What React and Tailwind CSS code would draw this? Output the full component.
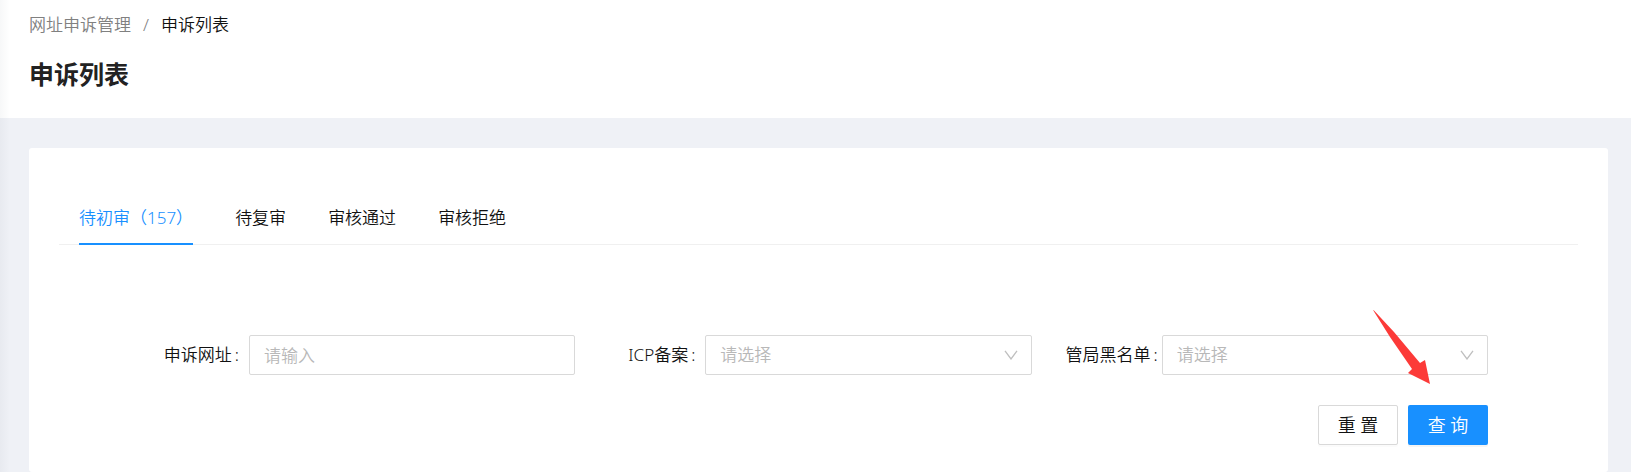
import React from "react";

const tabs = ["待初审（157）", "待复审", "审核通过", "审核拒绝"];

function Field({ id, label, tight, children }) {
  return (
    <div className="flex items-center">
      <label
        htmlFor={id}
        className={`flex w-[130px] shrink-0 justify-end gap-[3px] whitespace-nowrap ${tight ? "pr-1" : "pr-2.5"}`}
      >
        <span>{label}</span>
        <span>:</span>
      </label>
      {children}
    </div>
  );
}

function Select({ id }) {
  return (
    <div className="relative min-w-0 flex-1">
      <select
        id={id}
        defaultValue=""
        className="block h-10 w-full appearance-none rounded-[2px] border border-[#d9d9d9] bg-white px-3.5 text-[#b8b8b8] outline-none"
      >
        <option value="">请选择</option>
        <option value="yes">是</option>
        <option value="no">否</option>
      </select>
      <svg
        aria-hidden="true"
        viewBox="0 0 14 10"
        className="pointer-events-none absolute top-[15px] right-3.5 h-2.5 w-3.5"
        fill="none"
        stroke="#bfbfbf"
        strokeWidth="1.3"
      >
        <path d="M1 0.8 L7 9 L13 0.8" />
      </svg>
    </div>
  );
}

export default function App() {
  const [active, setActive] = React.useState(0);
  return (
    <div className="relative flex min-h-screen flex-col bg-[#eff1f6] font-['Noto_Sans','Noto_Sans_CJK_SC',sans-serif] text-[17px] leading-7 font-[350] text-[#111]">
      <div className="pointer-events-none absolute inset-y-0 left-0 w-2.5 bg-linear-to-r from-[#00152908] to-transparent" />
      <header className="bg-white px-[29px] pt-[11px] pb-[26px]">
        <nav aria-label="breadcrumb" className="flex gap-3">
          <a href="#appeals" className="text-[#808080]">网址申诉管理</a>
          <span className="text-[#808080]">/</span>
          <span>申诉列表</span>
        </nav>
        <h1 className="mt-[17px] text-[25px] leading-9 font-bold text-[#222]">申诉列表</h1>
      </header>

      <main className="mt-[30px] mr-[23px] ml-[29px] flex-1 rounded-[3px] bg-white p-[30px] pb-6">
        <div role="tablist" className="flex gap-[42px] border-b border-[#f0f0f0] pt-[13px] pl-5">
          {tabs.map((tab, i) => (
            <button
              key={tab}
              type="button"
              role="tab"
              aria-selected={i === active}
              onClick={() => setActive(i)}
              className={`-mb-px border-b-2 pt-[13px] pb-[11px] ${
                i === active ? "border-[#1890ff] text-[#1890ff]" : "border-transparent"
              }`}
            >
              {tab}
            </button>
          ))}
        </div>

        <form
          className="relative mt-[90px] mr-[90px] ml-[60px] grid grid-cols-3 gap-y-[30px]"
          onSubmit={(e) => e.preventDefault()}
        >
          <Field id="url" label="申诉网址">
            <input
              id="url"
              type="text"
              placeholder="请输入"
              className="h-10 min-w-0 flex-1 rounded-[2px] border border-[#d9d9d9] px-3.5 outline-none placeholder:text-[#b8b8b8]"
            />
          </Field>
          <Field id="icp" label="ICP备案">
            <Select id="icp" />
          </Field>
          <Field id="blacklist" label="管局黑名单" tight>
            <Select id="blacklist" />
          </Field>
          <div className="col-span-3 flex justify-end gap-2.5">
            <button
              type="reset"
              className="h-10 w-20 rounded-[2px] border border-[#d9d9d9] bg-white text-[18px] shadow-[0_2px_0_rgba(0,0,0,0.015)]"
            >
              重 置
            </button>
            <button
              type="submit"
              className="h-10 w-20 rounded-[2px] bg-[#1890ff] text-[18px] text-white shadow-[0_2px_0_rgba(0,0,0,0.045)]"
            >
              查 询
            </button>
          </div>
          <svg
            aria-hidden="true"
            viewBox="0 0 57 74"
            className="pointer-events-none absolute -top-[25px] right-[58px] h-[74px] w-[57px]"
            fill="#fc3a38"
          >
            <path d="M0 0 L1 0.5 L21 22 L47 53 L52 50 L57 74 L35 63 L39 59 L17 27 Z" />
          </svg>
        </form>
      </main>
    </div>
  );
}
